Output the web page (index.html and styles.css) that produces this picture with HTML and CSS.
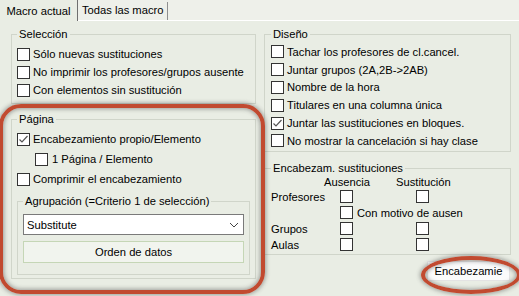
FILE: index.html
```html
<!DOCTYPE html>
<html lang="es">
<head>
  <meta charset="UTF-8" />
  <title>Macro actual</title>
  <link rel="stylesheet" href="styles.css">
</head>
<body>
  <div class="tabs">
    <div class="tab active">Macro actual</div>
    <div class="tab">Todas las macro</div>
  </div>
  <div class="panel">
    <div class="col">
      <fieldset class="group sel">
        <legend>Selección</legend>
        <div class="chk"><span class="box"></span>Sólo nuevas sustituciones</div>
        <div class="chk"><span class="box"></span>No imprimir los profesores/grupos ausente</div>
        <div class="chk"><span class="box"></span>Con elementos sin sustitución</div>
      </fieldset>
      <fieldset class="group pag">
        <legend>Página</legend>
        <div class="chk"><span class="box"><svg width="11" height="11" viewBox="0 0 11 11"><polyline points="1.5,5.5 4,8 9.5,2" fill="none" stroke="#555" stroke-width="1.2"/></svg></span>Encabezamiento propio/Elemento</div>
        <div class="chk sub"><span class="box"></span>1 Página / Elemento</div>
        <div class="chk"><span class="box"></span>Comprimir el encabezamiento</div>
        <fieldset class="group agr">
          <legend>Agrupación (=Criterio 1 de selección)</legend>
          <div class="select">
            <span>Substitute</span>
            <svg width="10" height="6" viewBox="0 0 10 6"><polyline points="1,1 5,5 9,1" fill="none" stroke="#444" stroke-width="1"/></svg>
          </div>
          <div class="btn wide">Orden de datos</div>
        </fieldset>
      </fieldset>
    </div>
    <div class="col">
      <fieldset class="group dis">
        <legend>Diseño</legend>
        <div class="chk"><span class="box"></span>Tachar los profesores de cl.cancel.</div>
        <div class="chk"><span class="box"></span>Juntar grupos (2A,2B-&gt;2AB)</div>
        <div class="chk"><span class="box"></span>Nombre de la hora</div>
        <div class="chk"><span class="box"></span>Titulares en una columna única</div>
        <div class="chk"><span class="box"><svg width="11" height="11" viewBox="0 0 11 11"><polyline points="1.5,5.5 4,8 9.5,2" fill="none" stroke="#555" stroke-width="1.2"/></svg></span>Juntar las sustituciones en bloques.</div>
        <div class="chk"><span class="box"></span>No mostrar la cancelación si hay clase</div>
      </fieldset>
      <fieldset class="group enc">
        <legend>Encabezam. sustituciones</legend>
        <div class="grid">
          <span></span><span class="head">Ausencia</span><span class="head">Sustitución</span>
          <span>Profesores</span><span class="box"></span><span class="box"></span>
          <span></span><span class="wide-cell"><span class="box"></span>Con motivo de ausen</span>
          <span>Grupos</span><span class="box"></span><span class="box"></span>
          <span>Aulas</span><span class="box"></span><span class="box"></span>
        </div>
      </fieldset>
      <div class="actions">
        <div class="btn small">Encabezamie</div>
      </div>
    </div>
  </div>
  <div class="mark mark-page"></div>
  <div class="mark mark-btn"></div>
</body>
</html>
```

FILE: styles.css
```css
body { margin: 0; width: 519px; height: 296px; background: #e9ede4; font: 11.2px "Liberation Sans", Arial, sans-serif; color: #000; position: relative; overflow: hidden; }
.tabs { display: flex; height: 20px; background: #eef0ea; border-bottom: 1px solid #fff; }
.tab { height: 18px; margin-top: 2px; padding: 0 4px; line-height: 17px; border-right: 1px solid #8f8f8f; }
.tab.active { height: 21px; margin-top: 0; width: 77px; padding: 0; text-align: center; line-height: 22px; background: #e9ede4; border-right: 1px solid #6f6f6f; }

.panel { display: grid; grid-template-columns: 245px 247px; column-gap: 8px; padding: 7px 0 0 11px; }
.group { margin: 0; padding: 0 5px; border: 1px solid #d0d5ca; min-width: 0; }
.group legend { padding: 0 2px; line-height: 13px; }

.chk { display: flex; align-items: center; height: 18px; gap: 3px; white-space: nowrap; }
.box { display: inline-flex; align-items: center; justify-content: center; width: 11px; height: 11px; border: 1px solid #333; background: #fff; flex: none; }

.sel { padding-top: 4px; padding-bottom: 4px; }
.pag { margin-top: 9px; padding-top: 3px; padding-bottom: 3px; }
.pag > .chk { height: 20px; }
.pag > .sub { padding-left: 18px; gap: 4px; }
.agr { margin-top: 6px; padding-bottom: 11px; }
.select { display: flex; align-items: center; justify-content: space-between; height: 19px; margin-top: 6px; padding: 0 4px 0 3px; background: #fff; border: 1px solid #7a7a7a; }
.btn { display: flex; align-items: center; justify-content: center; box-sizing: border-box; }
.btn.wide { height: 22px; margin-top: 6px; background: #f1f4ee; border: 1px solid #c5d6b6; }

.dis { padding: 2px 5px 1px 6px; }
.dis .chk { height: 17.8px; }
.enc { margin-top: 10px; padding: 0 5px 1px 6px; }
.grid { display: grid; grid-template-columns: 69px 76px 1fr; grid-auto-rows: 16px; grid-template-rows: 14px; align-items: center; }
.grid .box { justify-self: start; }
.grid .head { justify-self: start; margin-left: -16px; }
.grid .head + .head { margin-left: -20px; }
.wide-cell { grid-column: 2 / 4; display: flex; align-items: center; gap: 4px; }

.actions { display: flex; justify-content: flex-end; margin-top: 6px; padding-right: 1px; }
.btn.small { width: 83px; height: 20px; background: #fbfbfb; border: 1px solid #e3e3e3; }

.mark { position: absolute; border: 4px solid #c14a30; box-shadow: 0 0 4px 1px rgba(60, 60, 60, 0.45), inset 0 0 4px 1px rgba(60, 60, 60, 0.45); }
.mark-page { left: -1px; top: 104px; width: 258px; height: 182px; border-radius: 22px; }
.mark-btn { left: 421px; top: 256px; width: 92px; height: 30px; border-radius: 50%; }
```
